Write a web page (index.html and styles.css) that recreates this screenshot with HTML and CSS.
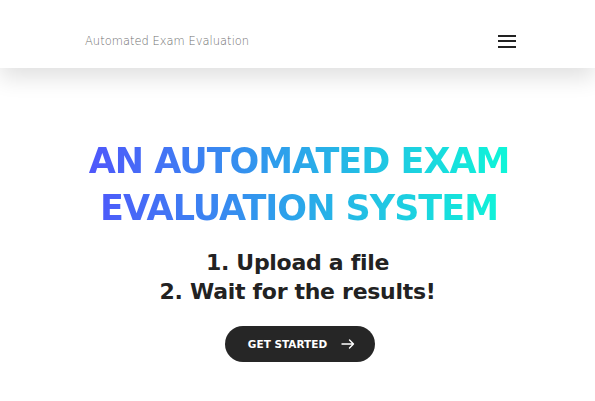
FILE: index.html
```html
<!DOCTYPE html>
<html lang="en">
<head>
<meta charset="utf-8">
<title>Automated Exam Evaluation</title>
<link rel="stylesheet" href="styles.css">
</head>
<body>
<header class="topbar">
  <a class="brand" href="#">Automated Exam Evaluation</a>
  <button class="menu" aria-label="Menu">
    <span></span><span></span><span></span>
  </button>
</header>
<main class="hero">
  <h1 class="title">AN AUTOMATED EXAM<br>EVALUATION SYSTEM</h1>
  <p class="steps">1. Upload a file<br>2. Wait for the results!</p>
  <a class="cta" href="#">GET STARTED
    <svg width="14" height="10" viewBox="0 0 14 10" fill="none" stroke="#fff" stroke-width="1.4" stroke-linecap="round" stroke-linejoin="round"><path d="M1 5h11.5M8.5 1l4 4-4 4"/></svg>
  </a>
</main>
</body>
</html>
```
FILE: styles.css
```css
* { box-sizing: border-box; }
html, body { margin: 0; padding: 0; background: #fff; }
body { font-family: "DejaVu Sans", "Liberation Sans", sans-serif; color: #222; }

.topbar {
  height: 68px;
  display: flex;
  align-items: center;
  justify-content: space-between;
  padding: 14px 79px 0 85px;
  background: #fff;
  box-shadow: 0 10px 22px rgba(0,0,0,0.12);
  position: relative;
  z-index: 1;
}
.brand {
  font-size: 11.5px;
  color: #707070;
  text-decoration: none;
  font-weight: 300;
}
.menu {
  border: 0;
  background: none;
  padding: 0;
  width: 18px;
  display: flex;
  flex-direction: column;
  gap: 3.5px;
  cursor: pointer;
}
.menu span {
  display: block;
  height: 2px;
  background: #222;
}

.hero {
  display: flex;
  flex-direction: column;
  align-items: center;
  text-align: center;
  padding-top: 70px;
}
.title {
  margin: 0 0 0 3px;
  font-size: 35px;
  line-height: 47px;
  letter-spacing: -1px;
  font-weight: 700;
  background: linear-gradient(90deg, #4f57fb 0%, #2ba6ea 50%, #0ff6d8 100%);
  -webkit-background-clip: text;
  background-clip: text;
  color: transparent;
}
.steps {
  margin: 16px 0 0;
  font-size: 22px;
  line-height: 29px;
  letter-spacing: -0.3px;
  font-weight: 700;
  color: #222;
}
.cta {
  margin-top: 20px;
  margin-left: 4px;
  width: 150px;
  height: 36px;
  border-radius: 18px;
  background: #262626;
  color: #fff;
  text-decoration: none;
  font-size: 10.5px;
  font-weight: 600;
  display: flex;
  align-items: center;
  justify-content: center;
  gap: 14px;
  padding-left: 4px;
}
```
